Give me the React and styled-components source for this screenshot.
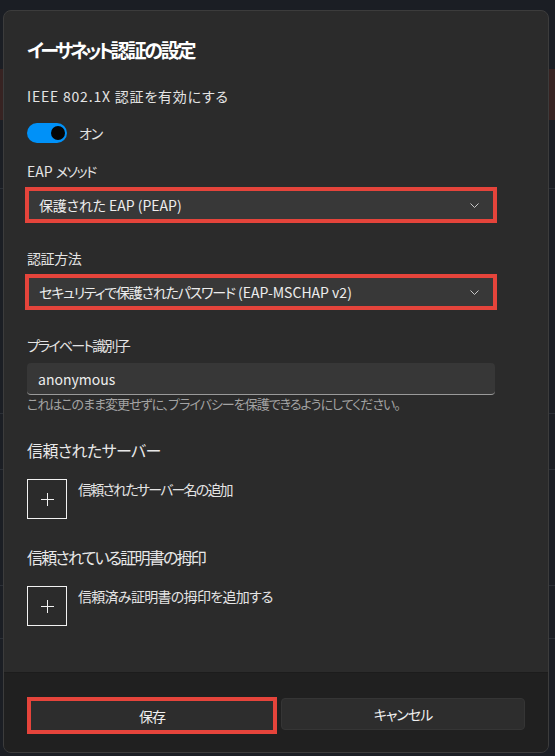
import React from 'react';
import styled, { createGlobalStyle } from 'styled-components';

const GlobalStyle = createGlobalStyle`
  html, body {
    margin: 0;
    padding: 0;
    background: #1b1e24;
  }
  body {
    font-family: "Noto Sans CJK JP", "Noto Sans", sans-serif;
    font-feature-settings: "palt";
    color: #e6e6e6;
    -webkit-font-smoothing: antialiased;
  }
`;

const Screen = styled.div`
  position: relative;
  width: 555px;
  height: 756px;
  overflow: hidden;
  background: #1b1e24;
`;

const Backdrop = styled.div`
  display: flex;
  flex-direction: column;
`;

const BackRow = styled.div`
  height: ${(p) => p.h}px;
  background: ${(p) => p.bg || 'transparent'};
  border-bottom: 1px solid ${(p) => p.line || 'transparent'};
`;

const Dialog = styled.div`
  position: absolute;
  top: 10px;
  left: 3px;
  width: 546px;
  height: 743px;
  box-sizing: border-box;
  display: flex;
  flex-direction: column;
  background: #2b2b2b;
  border: 1px solid #3c3c3c;
  border-radius: 8px;
  overflow: hidden;
`;

const Body = styled.div`
  flex: 1;
  display: flex;
  flex-direction: column;
  padding: 26px 53px 0 23px;
`;

// latin runs keep their natural spacing inside the tightened japanese text
const Latin = styled.span`
  letter-spacing: 0;
`;

const Title = styled.h1`
  margin: 0;
  font-size: 19px;
  line-height: 26px;
  font-weight: 700;
  letter-spacing: -2.2px;
  color: #ffffff;
`;

const Kana = styled.span`
  letter-spacing: -3.4px;
`;

const Label = styled.div`
  margin-top: ${(p) => p.mt}px;
  font-size: 14px;
  line-height: 20px;
  letter-spacing: ${(p) => p.ls ?? -1.2}px;
  color: #e4e4e4;
`;

const SectionTitle = styled.div`
  margin-top: ${(p) => p.mt}px;
  font-size: 16px;
  line-height: 22px;
  letter-spacing: ${(p) => p.ls ?? -1.8}px;
  color: #e8e8e8;
`;

const ToggleRow = styled.div`
  margin-top: 17px;
  display: flex;
  align-items: center;
  gap: 12px;
  height: 20px;
  font-size: 14px;
  letter-spacing: -1px;
  color: #e4e4e4;
`;

const Toggle = styled.div`
  position: relative;
  width: 40px;
  height: 20px;
  border-radius: 10px;
  background: #0091f8;
  &::after {
    content: '';
    position: absolute;
    top: 3px;
    right: 2px;
    width: 14px;
    height: 14px;
    border-radius: 50%;
    background: #050505;
  }
`;

const Select = styled.div`
  margin-top: 8px;
  height: 32px;
  box-sizing: border-box;
  display: flex;
  align-items: center;
  justify-content: space-between;
  padding: 0 16px 0 12px;
  background: #383838;
  border-radius: ${(p) => (p.marked ? 0 : 4)}px;
  font-size: 14px;
  letter-spacing: ${(p) => p.ls ?? -1.5}px;
  color: #ededed;
  outline: ${(p) => (p.marked ? '4px solid #e5443b' : 'none')};
  outline-offset: -2px;
`;

const Chevron = () => (
  <svg width="9" height="5" viewBox="0 0 9 5" fill="none">
    <path d="M0.5 0.5 L4.5 4.5 L8.5 0.5" stroke="#c8c8c8" strokeWidth="1" />
  </svg>
);

const Input = styled.div`
  margin-top: 8px;
  height: 32px;
  box-sizing: border-box;
  display: flex;
  align-items: center;
  padding-left: 11px;
  background: #373737;
  border-radius: 4px;
  border-bottom: 1px solid #9a9a9a;
  font-size: 14px;
  color: #ededed;
`;

const Help = styled.div`
  font-size: 13px;
  line-height: 18px;
  letter-spacing: -1px;
  color: #a3a3a3;
`;

const AddRow = styled.div`
  margin-top: 18px;
  display: flex;
  align-items: flex-start;
  gap: 11px;
`;

const AddBox = styled.div`
  width: 40px;
  height: 40px;
  box-sizing: border-box;
  border: 1px solid #f2f2f2;
  display: flex;
  align-items: center;
  justify-content: center;
`;

const AddText = styled.div`
  font-size: 14px;
  line-height: 20px;
  letter-spacing: ${(p) => p.ls ?? -1.2}px;
  color: #e4e4e4;
`;

const Plus = () => (
  <svg width="13" height="13" viewBox="0 0 13 13">
    <path d="M6.5 0 V13 M0 6.5 H13" stroke="#f2f2f2" strokeWidth="1" />
  </svg>
);

const Footer = styled.div`
  height: 80px;
  box-sizing: border-box;
  display: flex;
  align-items: flex-start;
  gap: 4px;
  padding: 24px 23px 0 23px;
  background: #202020;
  border-top: 1px solid #1c1c1c;
`;

const Button = styled.button`
  flex: 1;
  height: ${(p) => (p.marked ? 37 : 32)}px;
  margin-top: ${(p) => (p.marked ? 0 : 1)}px;
  box-sizing: border-box;
  background: #2d2d2d;
  border: ${(p) => (p.marked ? '4px solid #e5443b' : '1px solid #353535')};
  border-radius: ${(p) => (p.marked ? 0 : 4)}px;
  font-family: inherit;
  font-feature-settings: "palt";
  font-size: 14px;
  letter-spacing: -1px;
  color: #f0f0f0;
  padding: 0;
`;

export default function App() {
  return (
    <Screen>
      <GlobalStyle />
      <Backdrop>
        <BackRow h={68} />
        <BackRow h={50} bg="#372322" />
        <BackRow h={68} line="#2b2f36" />
        <BackRow h={224} line="#2b2f36" />
        <BackRow h={55} line="#2b2f36" />
        <BackRow h={115} line="#2b2f36" />
        <BackRow h={52} line="#2b2f36" />
      </Backdrop>
      <Dialog>
        <Body>
          <Title><Kana>イーサネット</Kana>認証の設定</Title>
          <Label mt={23} ls={0.8}>IEEE 802.1X 認証を有効にする</Label>
          <ToggleRow>
            <Toggle />
            <span>オン</span>
          </ToggleRow>
          <Label mt={18} ls={-1.5}><Latin>EAP </Latin>メソッド</Label>
          <Select marked ls={-0.2}>
            <span>保護された<Latin> EAP (PEAP)</Latin></span>
            <Chevron />
          </Select>
          <Label mt={27} ls={-0.4}>認証方法</Label>
          <Select marked ls={-1.2}>
            <span>セキュリティで保護されたパスワード<Latin> (EAP-MSCHAP v2)</Latin></span>
            <Chevron />
          </Select>
          <Label mt={27} ls={-1.8}>プライベート識別子</Label>
          <Input>anonymous</Input>
          <Help>これはこのまま変更せずに、プライバシーを保護できるようにしてください。</Help>
          <SectionTitle mt={26} ls={-0.6}>信頼されたサーバー</SectionTitle>
          <AddRow>
            <AddBox><Plus /></AddBox>
            <AddText ls={-1.8}>信頼されたサーバー名の追加</AddText>
          </AddRow>
          <SectionTitle mt={27}>信頼されている証明書の拇印</SectionTitle>
          <AddRow>
            <AddBox><Plus /></AddBox>
            <AddText ls={-0.7}>信頼済み証明書の拇印を追加する</AddText>
          </AddRow>
        </Body>
        <Footer>
          <Button marked>保存</Button>
          <Button>キャンセル</Button>
        </Footer>
      </Dialog>
    </Screen>
  );
}
